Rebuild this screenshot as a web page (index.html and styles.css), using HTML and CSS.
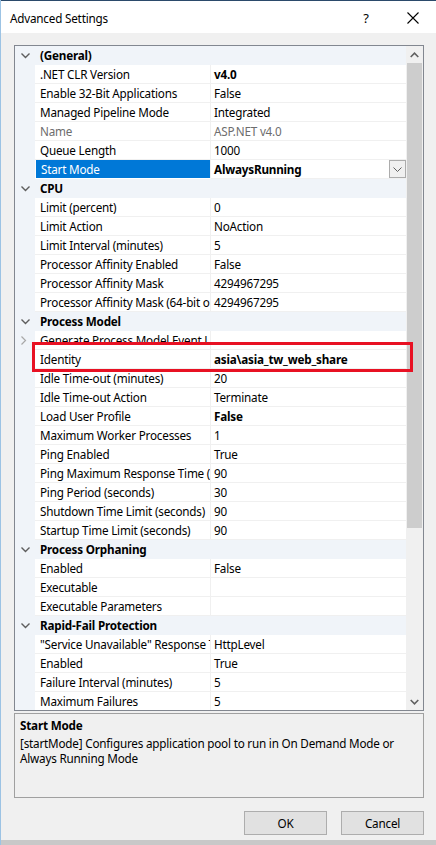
FILE: index.html
```html
<!DOCTYPE html>
<html>
<head>
<meta charset="utf-8">
<link rel="stylesheet" href="styles.css">
</head>
<body>
<div class="window">
  <div class="titlebar">
    <span class="title">Advanced Settings</span>
    <span class="help">?</span>
    <span class="close"><svg width="12" height="12" viewBox="0 0 12 12"><path d="M0.5 0.5 L11.5 11.5 M11.5 0.5 L0.5 11.5" stroke="#000" stroke-width="1.1" fill="none"/></svg></span>
  </div>
  <div class="body">
    <div class="grid">
      <div class="rows">
        <div class="row cat"><span class="gut"><svg class="chev" width="9" height="6" viewBox="0 0 9 6"><path d="M0.5 0.5 L4.5 4.5 L8.5 0.5" stroke="#5e5e5e" stroke-width="1.4" fill="none"/></svg></span><span class="catname">(General)</span></div>
        <div class="row"><span class="gut"></span><span class="name">.NET CLR Version</span><span class="val b">v4.0</span></div>
        <div class="row"><span class="gut"></span><span class="name">Enable 32-Bit Applications</span><span class="val">False</span></div>
        <div class="row"><span class="gut"></span><span class="name">Managed Pipeline Mode</span><span class="val">Integrated</span></div>
        <div class="row dis"><span class="gut"></span><span class="name">Name</span><span class="val">ASP.NET v4.0</span></div>
        <div class="row"><span class="gut"></span><span class="name">Queue Length</span><span class="val">1000</span></div>
        <div class="row sel"><span class="gut"></span><span class="name">Start Mode</span><span class="val b">AlwaysRunning<span class="dd"><svg width="9" height="5" viewBox="0 0 9 5"><path d="M0.5 0.5 L4.5 4.5 L8.5 0.5" stroke="#606060" stroke-width="1" fill="none"/></svg></span></span></div>
        <div class="row cat"><span class="gut"><svg class="chev" width="9" height="6" viewBox="0 0 9 6"><path d="M0.5 0.5 L4.5 4.5 L8.5 0.5" stroke="#5e5e5e" stroke-width="1.4" fill="none"/></svg></span><span class="catname">CPU</span></div>
        <div class="row"><span class="gut"></span><span class="name">Limit (percent)</span><span class="val">0</span></div>
        <div class="row"><span class="gut"></span><span class="name">Limit Action</span><span class="val">NoAction</span></div>
        <div class="row"><span class="gut"></span><span class="name">Limit Interval (minutes)</span><span class="val">5</span></div>
        <div class="row"><span class="gut"></span><span class="name">Processor Affinity Enabled</span><span class="val">False</span></div>
        <div class="row"><span class="gut"></span><span class="name">Processor Affinity Mask</span><span class="val">4294967295</span></div>
        <div class="row"><span class="gut"></span><span class="name">Processor Affinity Mask (64-bit o</span><span class="val">4294967295</span></div>
        <div class="row cat"><span class="gut"><svg class="chev" width="9" height="6" viewBox="0 0 9 6"><path d="M0.5 0.5 L4.5 4.5 L8.5 0.5" stroke="#5e5e5e" stroke-width="1.4" fill="none"/></svg></span><span class="catname">Process Model</span></div>
        <div class="row"><span class="gut"><svg class="chevr" width="6" height="9" viewBox="0 0 6 9"><path d="M0.5 0.5 L4.5 4.5 L0.5 8.5" stroke="#a8a8a8" stroke-width="1.2" fill="none"/></svg></span><span class="name">Generate Process Model Event L</span><span class="val"></span></div>
        <div class="row"><span class="gut"></span><span class="name">Identity</span><span class="val b">asia\asia_tw_web_share</span></div>
        <div class="row"><span class="gut"></span><span class="name">Idle Time-out (minutes)</span><span class="val">20</span></div>
        <div class="row"><span class="gut"></span><span class="name">Idle Time-out Action</span><span class="val">Terminate</span></div>
        <div class="row"><span class="gut"></span><span class="name">Load User Profile</span><span class="val b">False</span></div>
        <div class="row"><span class="gut"></span><span class="name">Maximum Worker Processes</span><span class="val">1</span></div>
        <div class="row"><span class="gut"></span><span class="name">Ping Enabled</span><span class="val">True</span></div>
        <div class="row"><span class="gut"></span><span class="name">Ping Maximum Response Time (</span><span class="val">90</span></div>
        <div class="row"><span class="gut"></span><span class="name">Ping Period (seconds)</span><span class="val">30</span></div>
        <div class="row"><span class="gut"></span><span class="name">Shutdown Time Limit (seconds)</span><span class="val">90</span></div>
        <div class="row"><span class="gut"></span><span class="name">Startup Time Limit (seconds)</span><span class="val">90</span></div>
        <div class="row cat"><span class="gut"><svg class="chev" width="9" height="6" viewBox="0 0 9 6"><path d="M0.5 0.5 L4.5 4.5 L8.5 0.5" stroke="#5e5e5e" stroke-width="1.4" fill="none"/></svg></span><span class="catname">Process Orphaning</span></div>
        <div class="row"><span class="gut"></span><span class="name">Enabled</span><span class="val">False</span></div>
        <div class="row"><span class="gut"></span><span class="name">Executable</span><span class="val"></span></div>
        <div class="row"><span class="gut"></span><span class="name">Executable Parameters</span><span class="val"></span></div>
        <div class="row cat"><span class="gut"><svg class="chev" width="9" height="6" viewBox="0 0 9 6"><path d="M0.5 0.5 L4.5 4.5 L8.5 0.5" stroke="#5e5e5e" stroke-width="1.4" fill="none"/></svg></span><span class="catname">Rapid-Fail Protection</span></div>
        <div class="row"><span class="gut"></span><span class="name">"Service Unavailable" Response T</span><span class="val">HttpLevel</span></div>
        <div class="row"><span class="gut"></span><span class="name">Enabled</span><span class="val">True</span></div>
        <div class="row"><span class="gut"></span><span class="name">Failure Interval (minutes)</span><span class="val">5</span></div>
        <div class="row"><span class="gut"></span><span class="name">Maximum Failures</span><span class="val">5</span></div>
      </div>
      <div class="scrollbar">
        <div class="sb-btn"><svg width="9" height="6" viewBox="0 0 9 6"><path d="M0.7 5 L4.5 1.2 L8.3 5" stroke="#606060" stroke-width="1.6" fill="none"/></svg></div>
        <div class="sb-track"><div class="sb-thumb"></div></div>
        <div class="sb-btn"><svg width="9" height="6" viewBox="0 0 9 6"><path d="M0.7 1 L4.5 4.8 L8.3 1" stroke="#606060" stroke-width="1.6" fill="none"/></svg></div>
      </div>
      <div class="highlight"></div>
    </div>
    <div class="desc">
      <div class="desc-title">Start Mode</div>
      <div class="desc-text">[startMode] Configures application pool to run in On Demand Mode or Always Running Mode</div>
    </div>
    <div class="buttons">
      <button class="btn">OK</button>
      <button class="btn">Cancel</button>
    </div>
  </div>
  <div class="footer"></div>
</div>
</body>
</html>
```
FILE: styles.css
```css
* { box-sizing: border-box; }
html, body { margin: 0; padding: 0; }
body {
  width: 436px;
  height: 845px;
  overflow: hidden;
  font-family: "Noto Sans", "Open Sans", sans-serif;
  font-size: 11.7px;
  letter-spacing: -0.2px;
  color: #000;
  background: #f0f0f0;
}
.window {
  height: 845px;
  display: flex;
  flex-direction: column;
  border-left: 1px solid #9cc3e4;
}
.titlebar {
  height: 33px;
  background: #fff;
  display: flex;
  align-items: center;
  padding-left: 9px;
  padding-top: 2px;
  border-top: 1px solid #2b4a6b;
}
.title { flex: 1; }
.help { width: 12px; font-size: 13px; margin-right: 35px; text-align: center; }
.close { width: 12px; height: 12px; margin-right: 17px; display: flex; }
.body {
  flex: 1;
  display: flex;
  flex-direction: column;
  padding: 12px 12px 0 13px;
}
.grid {
  position: relative;
  height: 666px;
  border: 1px solid #828790;
  background: #fff;
  display: flex;
  overflow: hidden;
}
.rows { flex: 1; display: flex; flex-direction: column; }
.row {
  flex: 0 0 19px;
  height: 19px;
  display: flex;
  line-height: 17px;
  white-space: nowrap;
}
.gut {
  flex: 0 0 20px;
  background: #f0f4f9;
  display: flex;
  align-items: center;
  justify-content: center;
}
.chev { margin-top: 1px; }
.chevr { margin-left: -2px; }
.name {
  flex: 0 0 176px;
  padding: 1px 4px 0 5px;
  overflow: hidden;
  border-bottom: 1px solid #f0f0f0;
  border-right: 1px solid #f0f0f0;
}
.val {
  flex: 1;
  padding: 1px 0 0 3px;
  overflow: hidden;
  border-bottom: 1px solid #f0f0f0;
  position: relative;
}
.b { font-weight: bold; }
.dis .name, .dis .val { color: #6d6d6d; }
.sel .name { background: #0078d7; color: #fff; border-left: 1px solid #fff; border-bottom-color: #fff; }
.dd {
  position: absolute;
  right: 0;
  top: 0;
  width: 17px;
  height: 18px;
  border: 1px solid #acacac;
  background: #f0f0f0;
  display: flex;
  align-items: center;
  justify-content: center;
}
.cat { background: #f0f4f9; font-weight: bold; }
.catname { padding: 1px 0 0 5px; }
.scrollbar {
  flex: 0 0 17px;
  display: flex;
  flex-direction: column;
  background: #f0f0f0;
}
.sb-btn {
  height: 17px;
  display: flex;
  align-items: center;
  justify-content: center;
}
.sb-track { flex: 1; }
.sb-thumb { margin: 0 1px; height: 465px; background: #cdcdcd; }
.highlight {
  position: absolute;
  left: 17px;
  top: 296px;
  width: 381px;
  height: 30px;
  border: 3px solid #e81123;
}
.desc {
  margin-top: 2px;
  height: 85px;
  border: 1px solid #a0a0a0;
  padding: 4px 5px;
  line-height: 15px;
}
.desc-title { font-weight: bold; margin-bottom: 3px; }
.buttons {
  margin-top: 13px;
  display: flex;
  justify-content: flex-end;
  gap: 14px;
}
.btn {
  width: 83px;
  height: 24px;
  font-family: inherit;
  font-size: inherit;
  letter-spacing: inherit;
  color: #000;
  background: #e1e1e1;
  border: 1px solid #adadad;
  padding: 0;
}
.footer { height: 5px; background: #c8c8c8; }
```
